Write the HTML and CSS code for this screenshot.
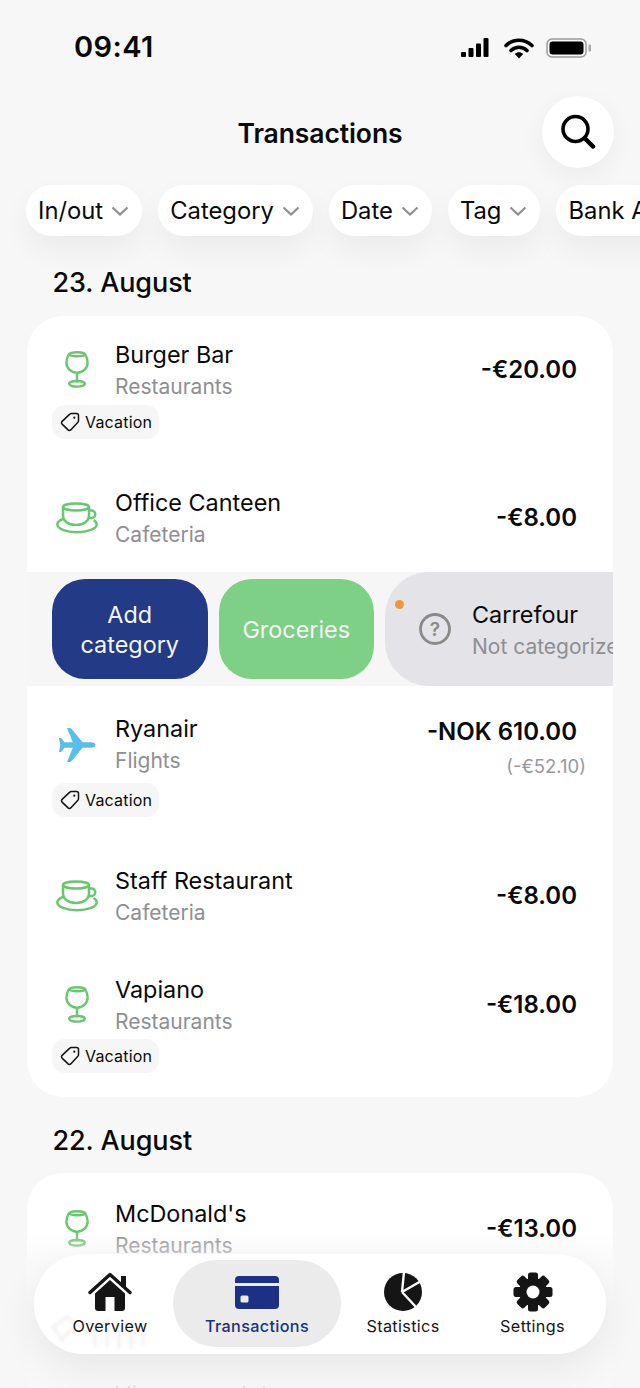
FILE: index.html
```html
<!DOCTYPE html>
<html lang="en">
<head>
<meta charset="utf-8">
<title>Transactions</title>
<link rel="stylesheet" href="styles.css">
</head>
<body>
<svg class="defs" width="0" height="0" aria-hidden="true">
  <symbol id="wine" viewBox="0 0 26 40">
    <path d="M4.500 2.800C2.600 6 1.500 9 1.500 12.500c0 6 5 11 11.500 11s11.500-5 11.500-11c0-3.500-1.100-6.500-3-9.700" fill="none" stroke="currentColor" stroke-width="2.600"/>
    <ellipse cx="13" cy="3.500" rx="8.500" ry="2.200" fill="none" stroke="currentColor" stroke-width="2.600"/>
    <path d="M13 23v11" stroke="currentColor" stroke-width="2.600"/>
    <ellipse cx="13" cy="35.500" rx="8.500" ry="3" fill="none" stroke="currentColor" stroke-width="2.600"/>
  </symbol>
  <symbol id="cup" viewBox="0 0 42 32">
    <ellipse cx="20" cy="5" rx="13" ry="3.500" fill="none" stroke="currentColor" stroke-width="2.500"/>
    <path d="M7 5v8c0 6 5 10 13 10s13-4 13-10V5" fill="none" stroke="currentColor" stroke-width="2.500"/>
    <path d="M33 8.500h2.500a3.200 3.200 0 0 1 0 7.500H32" fill="none" stroke="currentColor" stroke-width="2.500"/>
    <path d="M8 16.500C4 18 1.300 19.800 1.300 22.500c0 4 8.700 7.800 19.700 7.800s19.700-3.800 19.700-7.800c0-1.800-1-3.200-3-4.500" fill="none" stroke="currentColor" stroke-width="2.500"/>
  </symbol>
  <symbol id="plane" viewBox="0 0 37 34">
    <path d="M36.500 17c0-1.800-2-2.800-4.500-2.800h-8.500L12.500.8C12 .2 11.300 0 10.500 0H8l5.800 14.200H5.500L2.300 10H0l1.300 7L0 24h2.300l3.200-4.200h8.300L8 34h2.500c.8 0 1.500-.2 2-.8l11-13.400H32c2.500 0 4.500-1 4.500-2.800z" fill="currentColor"/>
  </symbol>
  <symbol id="tag" viewBox="0 0 20 20">
    <path d="M11.300 1.500h5.200c1.100 0 2 .9 2 2v5.200c0 .6-.2 1.100-.6 1.500l-7.200 7.700c-.7.700-1.900.8-2.600 0l-6-5.800c-.8-.7-.8-1.900 0-2.700l7.700-7.300c.4-.4.9-.6 1.500-.6z" fill="none" stroke="currentColor" stroke-width="1.500" stroke-linejoin="round"/>
    <circle cx="14.300" cy="5.700" r="1.100" fill="currentColor"/>
  </symbol>
</svg>

<div class="app">
  <div class="status">
    <span class="time">09:41</span>
    <div class="status-icons">
      <svg class="signal" viewBox="0 0 28 20" width="28" height="20"><rect x="0" y="14" width="5" height="5" rx="1"/><rect x="7.500" y="10" width="5" height="9" rx="1"/><rect x="15" y="5.500" width="5" height="13.500" rx="1"/><rect x="22.500" y="0" width="5" height="19" rx="1"/></svg>
      <svg class="wifi" viewBox="0 0 30 22" width="30" height="22"><path d="M2 8.500C9.500 1.500 20.500 1.500 28 8.500M7 13.500c4.700-4.300 11.300-4.300 16 0" fill="none" stroke="#000" stroke-width="3.600" stroke-linecap="round"/><path d="M10.800 17c2.500-2.200 5.900-2.200 8.400 0L15 21.500z"/></svg>
      <svg class="battery" viewBox="0 0 46 20" width="46" height="20"><rect x="1" y="1" width="39" height="18" rx="5" fill="none" stroke="#9a9a9a" stroke-width="1.500"/><rect x="3.500" y="3.500" width="34" height="13" rx="3"/><rect x="42.500" y="6.500" width="2.500" height="7" rx="1.200" fill="#aaa"/></svg>
    </div>
  </div>

  <header class="topbar">
    <h1 class="title">Transactions</h1>
    <button class="search" aria-label="Search">
      <svg viewBox="0 0 36 36" width="36" height="36"><circle cx="15.500" cy="15" r="12.500" fill="none" stroke="#000" stroke-width="3.600"/><path d="M25 24.500l8 8" stroke="#000" stroke-width="4.500" stroke-linecap="round"/></svg>
    </button>
  </header>

  <div class="chips">
    <div class="chip">In/out<svg class="chev" viewBox="0 0 18 10"><path d="M1.500 1.500L9 8.500l7.500-7"/></svg></div>
    <div class="chip">Category<svg class="chev" viewBox="0 0 18 10"><path d="M1.500 1.500L9 8.500l7.500-7"/></svg></div>
    <div class="chip">Date<svg class="chev" viewBox="0 0 18 10"><path d="M1.500 1.500L9 8.500l7.500-7"/></svg></div>
    <div class="chip">Tag<svg class="chev" viewBox="0 0 18 10"><path d="M1.500 1.500L9 8.500l7.500-7"/></svg></div>
    <div class="chip">Bank Account<svg class="chev" viewBox="0 0 18 10"><path d="M1.500 1.500L9 8.500l7.500-7"/></svg></div>
  </div>

  <main class="list">
    <h2 class="date">23. August</h2>
    <section class="card">
      <div class="row row-first">
        <div class="main">
          <span class="cat"><svg class="ico-wine"><use href="#wine"/></svg></span>
          <div class="text"><div class="name">Burger Bar</div><div class="sub">Restaurants</div></div>
          <div class="amount"><div class="value">-€20.00</div></div>
        </div>
        <div class="tag"><svg class="ico-tag"><use href="#tag"/></svg>Vacation</div>
      </div>
      <div class="row row-above-swipe">
        <div class="main">
          <span class="cat"><svg class="ico-cup"><use href="#cup"/></svg></span>
          <div class="text"><div class="name">Office Canteen</div><div class="sub">Cafeteria</div></div>
          <div class="amount"><div class="value">-€8.00</div></div>
        </div>
      </div>
      <div class="swipe">
        <button class="action action-add">Add<br>category</button>
        <button class="action action-cat">Groceries</button>
        <div class="swiped">
          <span class="dot"></span>
          <svg class="unknown" viewBox="0 0 32 32" width="32" height="32"><circle cx="16" cy="16" r="14.500" fill="none" stroke="currentColor" stroke-width="2.800"/><text x="16" y="22.500" text-anchor="middle" class="unknown-mark">?</text></svg>
          <div class="text"><div class="name">Carrefour</div><div class="sub">Not categorized</div></div>
        </div>
      </div>
      <div class="row">
        <div class="main">
          <span class="cat"><svg class="ico-plane"><use href="#plane"/></svg></span>
          <div class="text"><div class="name">Ryanair</div><div class="sub">Flights</div></div>
          <div class="amount amount-top"><div class="value">-NOK 610.00</div><div class="converted">(-€52.10)</div></div>
        </div>
        <div class="tag tag-low"><svg class="ico-tag"><use href="#tag"/></svg>Vacation</div>
      </div>
      <div class="row row-plain">
        <div class="main">
          <span class="cat"><svg class="ico-cup"><use href="#cup"/></svg></span>
          <div class="text"><div class="name">Staff Restaurant</div><div class="sub">Cafeteria</div></div>
          <div class="amount"><div class="value">-€8.00</div></div>
        </div>
      </div>
      <div class="row row-last">
        <div class="main">
          <span class="cat"><svg class="ico-wine"><use href="#wine"/></svg></span>
          <div class="text"><div class="name">Vapiano</div><div class="sub">Restaurants</div></div>
          <div class="amount"><div class="value">-€18.00</div></div>
        </div>
        <div class="tag tag-high"><svg class="ico-tag"><use href="#tag"/></svg>Vacation</div>
      </div>
    </section>

    <h2 class="date date-next">22. August</h2>
    <section class="card">
      <div class="row row-second-card">
        <div class="main">
          <span class="cat"><svg class="ico-wine"><use href="#wine"/></svg></span>
          <div class="text"><div class="name">McDonald's</div><div class="sub">Restaurants</div></div>
          <div class="amount"><div class="value">-€13.00</div></div>
        </div>
      </div>
      <div class="row row-plain">
        <div class="main">
          <span class="cat"><svg class="ico-wine"><use href="#wine"/></svg></span>
          <div class="text"><div class="name">Vinmonopolet</div><div class="sub">Restaurants</div></div>
          <div class="amount"><div class="value">-€9.00</div></div>
        </div>
      </div>
    </section>
  </main>

  <div class="fade"></div>

  <nav class="tabbar">
    <svg class="ghost" viewBox="0 0 110 40" width="110" height="40" aria-hidden="true"><g fill="none" stroke="#f3f3f3" stroke-width="3.500"><path d="M6 14L20 4l9 8-14 15z"/><path d="M48 8v26M60 6v28M72 10v26M84 14v22M96 18v14"/></g></svg>
    <a class="tab tab-first">
      <svg viewBox="0 0 44 40" width="44" height="40"><path d="M2 20.500L22 2.500l20 18" fill="none" stroke="#151515" stroke-width="3.400" stroke-linecap="round" stroke-linejoin="round"/><path d="M33 4h5v12l-5-4.500z" fill="#151515"/><path fill-rule="evenodd" d="M7 21.500L22 8l15 13.500V36a3 3 0 0 1-3 3H10a3 3 0 0 1-3-3zM17.500 25v14h9V25z" fill="#151515"/></svg>
      <span>Overview</span>
    </a>
    <a class="tab tab-active">
      <svg viewBox="0 0 44 34" width="44" height="34"><path d="M0 8V5a4 4 0 0 1 4-4h36a4 4 0 0 1 4 4v3z" fill="#1c3183"/><path fill-rule="evenodd" d="M0 11h44v19a4 4 0 0 1-4 4H4a4 4 0 0 1-4-4zM7 20.500a1.500 1.500 0 0 0-1.500 1.500v4A1.500 1.500 0 0 0 7 27.500h5a1.500 1.500 0 0 0 1.500-1.500v-4a1.500 1.500 0 0 0-1.500-1.500z" fill="#1c3183"/></svg>
      <span>Transactions</span>
    </a>
    <a class="tab">
      <svg viewBox="0 0 40 40" width="40" height="40"><circle cx="20" cy="20" r="19" fill="#151515"/><path d="M19 20L21 0M19 20l20-11.500M19 20l14 15" stroke="#fdfdfd" stroke-width="2.400" fill="none"/></svg>
      <span>Statistics</span>
    </a>
    <a class="tab">
      <svg viewBox="0 0 40 40" width="40" height="40" fill="#151515">
        <rect x="15" y="0.500" width="10" height="39" rx="2.500"/>
        <rect x="15" y="0.500" width="10" height="39" rx="2.500" transform="rotate(45 20 20)"/>
        <rect x="15" y="0.500" width="10" height="39" rx="2.500" transform="rotate(90 20 20)"/>
        <rect x="15" y="0.500" width="10" height="39" rx="2.500" transform="rotate(135 20 20)"/>
        <circle cx="20" cy="20" r="14"/>
        <circle cx="20" cy="20" r="6.500" fill="#fdfdfd"/>
      </svg>
      <span>Settings</span>
    </a>
  </nav>
</div>
</body>
</html>
```

FILE: styles.css
```css
* { box-sizing: border-box; }
html, body { margin: 0; padding: 0; }
body {
  width: 640px;
  height: 1388px;
  overflow: hidden;
  background: #f7f7f7;
  font-family: Inter, "Noto Sans", "Liberation Sans", sans-serif;
  color: #0a0a0a;
}
.defs { position: absolute; }
.app {
  position: relative;
  width: 640px;
  height: 1388px;
  overflow: hidden;
  background: #f7f7f7;
}

/* status bar */
.status {
  height: 96px;
  padding: 29px 48px 0 74px;
  display: flex;
  justify-content: space-between;
  align-items: flex-start;
}
.time { font-size: 29px; font-weight: 600; line-height: 36px; letter-spacing: .4px; }
.status-icons { display: flex; align-items: center; gap: 12px; padding-top: 8px; }
.signal { margin-right: 3px; }
.signal, .battery, .wifi { display: block; }

/* header */
.topbar {
  position: relative;
  height: 72px;
  display: flex;
  justify-content: center;
  align-items: center;
}
.title { margin: 0; padding-top: 2px; font-size: 26.5px; font-weight: 600; line-height: 70px; letter-spacing: -.1px; }
.search {
  position: absolute;
  right: 26px;
  top: 0;
  width: 72px;
  height: 72px;
  border: 0;
  padding: 0;
  border-radius: 50%;
  background: #fff;
  display: flex;
  align-items: center;
  justify-content: center;
  box-shadow: 0 8px 28px rgba(0,0,0,.05);
}

/* filter chips */
.chips {
  display: flex;
  gap: 16px;
  margin-top: 17px;
  padding-left: 26px;
  width: 900px;
}
.chip {
  flex: none;
  height: 51px;
  padding: 0 13px 0 12px;
  border-radius: 26px;
  background: #fff;
  display: flex;
  align-items: center;
  gap: 8px;
  font-size: 23.8px;
  font-weight: 400;
  box-shadow: 0 14px 30px rgba(0,0,0,.05);
}
.chev { width: 18px; height: 10px; fill: none; stroke: #8f8f8f; stroke-width: 2.200; }

/* list */
.list { padding: 0 27px; }
.date {
  margin: 26px 0 0 25.500px;
  font-size: 27px;
  font-weight: 550;
  line-height: 41px;
  letter-spacing: -.1px;
  padding-bottom: 1px;
}
.date-next { margin-top: 23px; padding-bottom: 0; }
.card {
  margin-top: 12px;
  background: #fff;
  border-radius: 36px;
  overflow: hidden;
}
.row { padding: 28px 36px 21px 25px; }
.row-first { padding-top: 24px; }
.row-plain { padding-bottom: 19px; }
.row-above-swipe { padding-bottom: 22px; }
.row-last { padding-bottom: 24px; }
.row-second-card { padding-top: 26px; padding-bottom: 91px; }
.main { display: flex; align-items: center; height: 62px; }
.cat {
  flex: none;
  width: 50px;
  margin-right: 13px;
  display: flex;
  justify-content: center;
  align-items: center;
}
.ico-wine { width: 24px; height: 39px; margin-bottom: 3px; color: #68c76f; display: block; }
.ico-cup { width: 42px; height: 32px; margin-bottom: 2px; color: #68c76f; display: block; }
.ico-plane { width: 37px; height: 34px; color: #58bfe9; display: block; }
.ico-tag { width: 20px; height: 20px; color: #111; flex: none; }
.text { height: 62px; min-width: 0; white-space: nowrap; }
.name { font-size: 23.4px; line-height: 30px; font-weight: 400; }
.sub { padding-top: 1px; font-size: 21px; line-height: 32px; color: #8e8e93; }
.amount { margin-left: auto; padding-bottom: 3px; text-align: right; }
.amount-top { height: 62px; padding: 3px 0 0; }
.value { font-size: 24px; line-height: 30px; font-weight: 600; }
.converted { font-size: 18.5px; line-height: 24px; margin: 7px -9px 0 0; color: #98989d; }
.tag {
  display: inline-flex;
  align-items: center;
  gap: 5px;
  height: 34px;
  margin-top: 3px;
  padding: 0 7px 0 8px;
  border-radius: 13px;
  background: #f6f6f6;
  font-size: 16px;
  letter-spacing: .2px;
  vertical-align: top;
}
.tag-low { margin-top: 7px; }
.tag-high { margin-top: 2px; }

/* swiped row */
.swipe {
  height: 114px;
  background: #f6f6f7;
  display: flex;
  align-items: center;
  padding-left: 25px;
  gap: 11px;
  overflow: hidden;
}
.action {
  flex: none;
  width: 155.500px;
  height: 100px;
  border: 0;
  border-radius: 33px;
  color: #f4f6f4;
  font: 400 23.4px/30px Inter, "Noto Sans", sans-serif;
  padding: 1px 0 0;
}
.action-add { background: #233a86; }
.action-cat { background: #7dd086; }
.swiped {
  position: relative;
  flex: none;
  width: 300px;
  height: 114px;
  border-radius: 44px 0 0 44px;
  background: #e3e3e8;
  display: flex;
  align-items: center;
  padding-left: 34px;
  gap: 21px;
}
.dot {
  position: absolute;
  left: 10px;
  top: 28px;
  width: 9px;
  height: 9px;
  border-radius: 50%;
  background: #f0973a;
}
.unknown { flex: none; color: #8a8a8a; }
.unknown-mark { font: 600 19px Inter, sans-serif; fill: #8a8a8a; }
.swiped .text { margin-top: 4px; }

/* fade below content */
.fade {
  position: absolute;
  left: 0;
  right: 0;
  top: 1232px;
  bottom: 0;
  background: linear-gradient(to bottom, rgba(247,247,247,0) 0, rgba(247,247,247,.55) 24px, rgba(247,247,247,.9) 70px, rgba(247,247,247,.9) 100%);
}

/* tab bar */
.tabbar {
  position: absolute;
  left: 34px;
  top: 1254px;
  width: 572px;
  height: 100px;
  padding: 6px;
  border-radius: 50px;
  background: rgba(255,255,255,.94);
  box-shadow: 0 14px 40px rgba(0,0,0,.07);
  display: grid;
  grid-template-columns: 133px 168px 124px 135px;
}
.ghost { position: absolute; left: 13px; top: 59px; filter: blur(1.500px); }
.tab {
  position: relative;
  display: flex;
  flex-direction: column;
  align-items: center;
  border-radius: 44px;
  color: #151515;
  font-size: 16.2px;
  font-weight: 400;
  letter-spacing: .35px;
  padding-top: 12px;
  height: 87px;
}
.tab-first { padding-left: 7px; }
.tab svg { display: block; height: 40px; }
.tab span { margin-top: 3px; line-height: 22px; white-space: nowrap; }
.tab-active { background: #ebebeb; color: #1c3183; font-weight: 500; }
```
